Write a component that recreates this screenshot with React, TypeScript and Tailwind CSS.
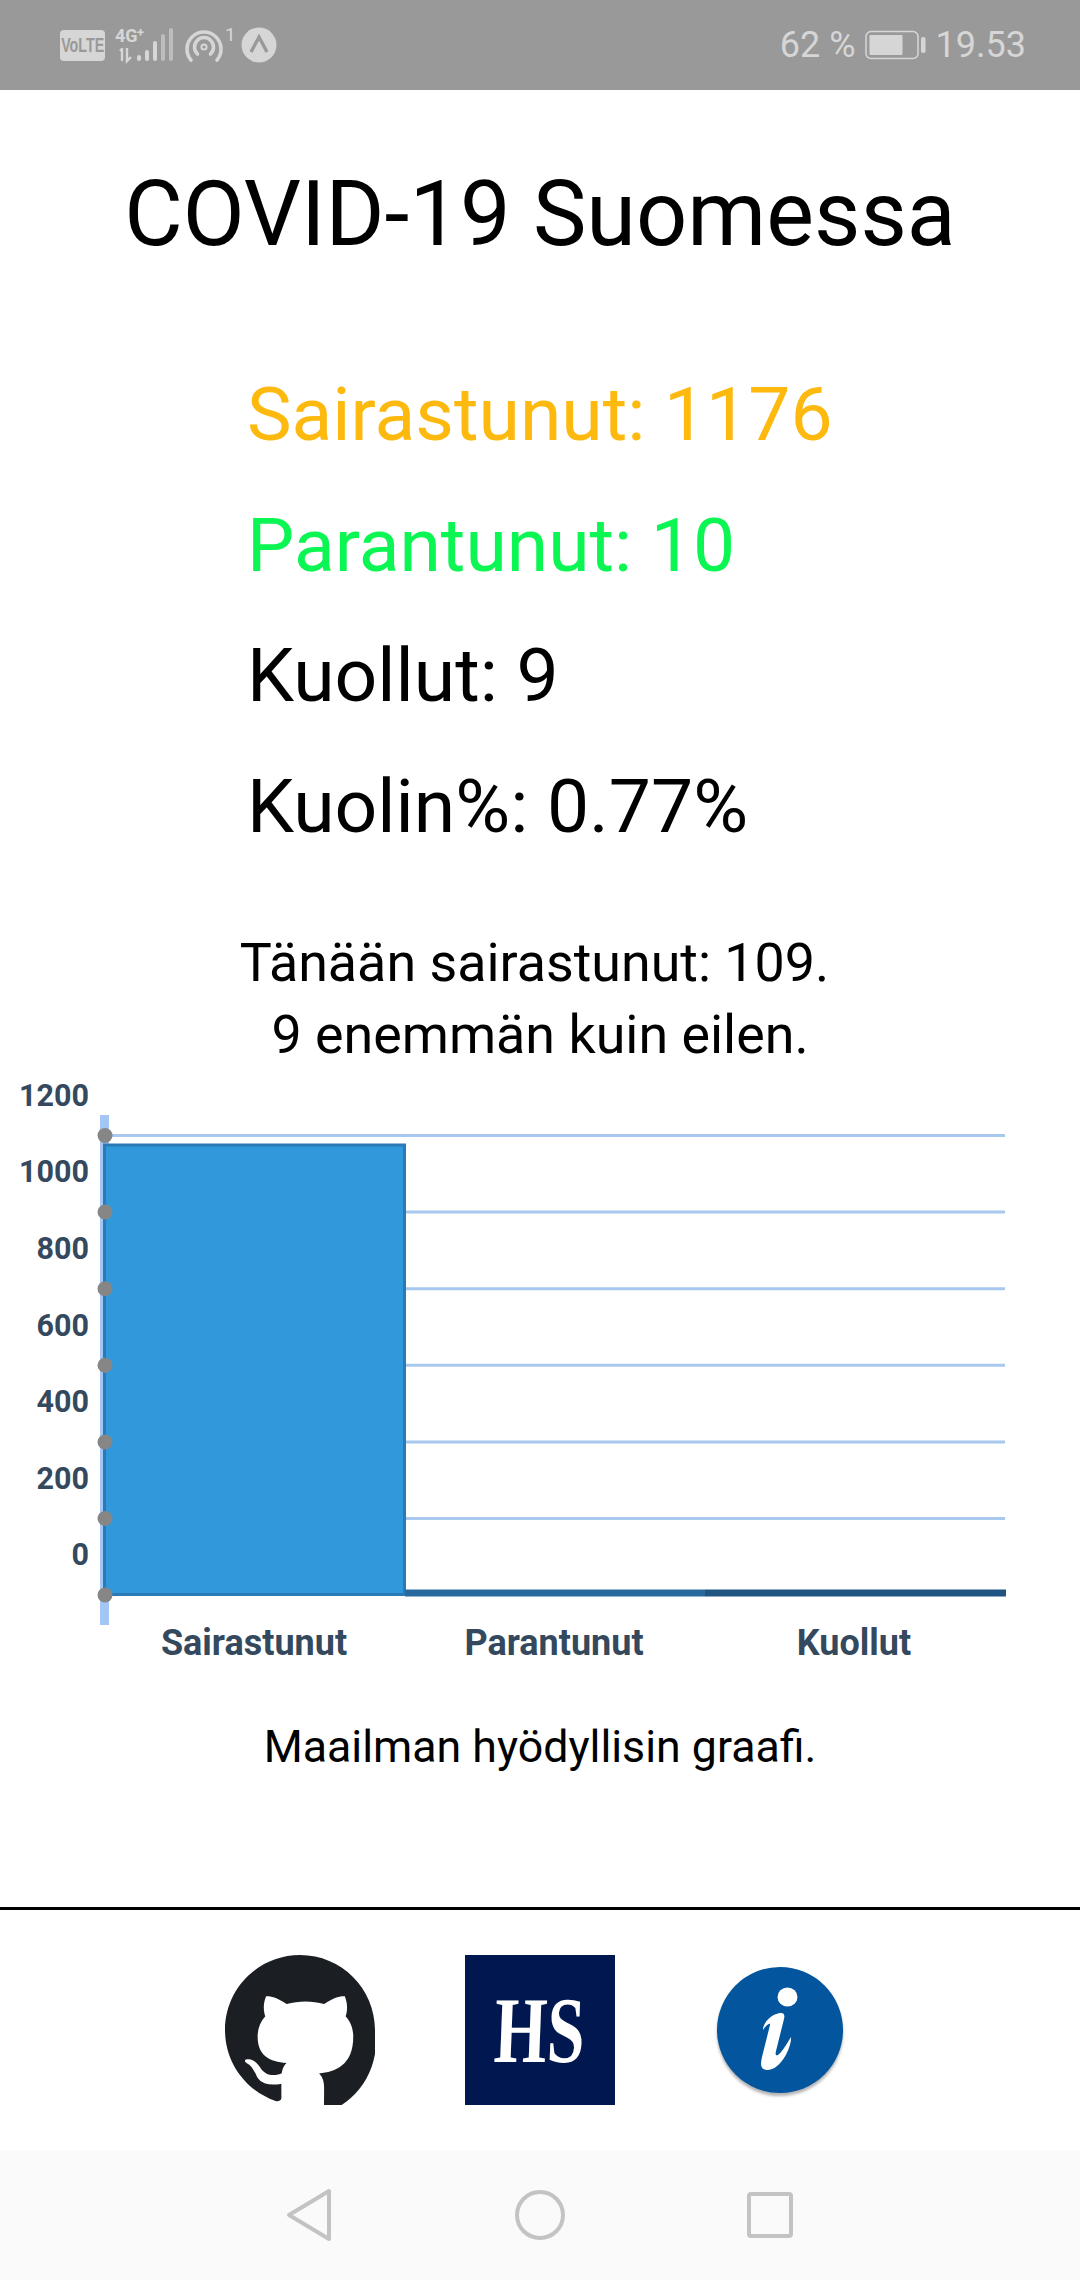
const gridLines = [1135.5, 1212, 1288.7, 1365.3, 1442, 1518.5]
const dots = [1135.5, 1212, 1288.7, 1365.3, 1442, 1518.5, 1595]
const yLabels = [
  { text: '1200', y: 1095 },
  { text: '1000', y: 1170.5 },
  { text: '800', y: 1248 },
  { text: '600', y: 1324.5 },
  { text: '400', y: 1401 },
  { text: '200', y: 1477.5 },
  { text: '0', y: 1554 },
]
const xLabels = [
  { text: 'Sairastunut', x: 254 },
  { text: 'Parantunut', x: 554 },
  { text: 'Kuollut', x: 854 },
]

function StatusBar() {
  return (
    <div className="flex h-[90px] shrink-0 items-center justify-between bg-[#999999] pl-[60px] pr-[54px] font-['Roboto',sans-serif] text-[#d6d6d6]">
      <div className="flex items-center">
        <div className="flex h-[31px] w-[45px] items-center justify-center rounded-[4px] bg-[#d6d6d6] font-['Liberation_Sans',sans-serif] text-[21px] font-bold text-[#999999]">
          <span className="scale-x-[0.68] whitespace-nowrap">VoLTE</span>
        </div>
        <svg width="60" height="40" viewBox="0 0 60 40" className="ml-[10px]">
          <text x="0" y="17" fontSize="18" fontWeight="700" fill="#d6d6d6" fontFamily="Roboto">4G</text>
          <text x="22" y="12" fontSize="13" fontWeight="700" fill="#d6d6d6" fontFamily="Roboto">+</text>
          <path d="M7 24l-2 2M7 23v13M12 23v13l4-4" stroke="#d6d6d6" strokeWidth="2.4" fill="none" />
          <rect x="22" y="30" width="4" height="6" rx="2" fill="#d6d6d6" />
          <rect x="30" y="25" width="4" height="11" rx="2" fill="#d6d6d6" />
          <rect x="38" y="16" width="4" height="20" rx="2" fill="#d6d6d6" />
          <rect x="46" y="9" width="4" height="27" rx="2" fill="#bdbdbd" />
          <rect x="54" y="3" width="4" height="33" rx="2" fill="#bdbdbd" />
        </svg>
        <svg width="40" height="34" viewBox="0 0 40 34" className="ml-[9px] mt-[2px]">
          <path d="M7 31a17 17 0 1 1 26 0" stroke="#d6d6d6" strokeWidth="3.6" fill="none" strokeLinecap="round" />
          <path d="M13.5 25a9.5 9.5 0 1 1 13 0" stroke="#d6d6d6" strokeWidth="3.6" fill="none" strokeLinecap="round" />
          <circle cx="20" cy="18" r="2.6" fill="none" stroke="#d6d6d6" strokeWidth="2" />
        </svg>
        <span className="mb-[22px] ml-[1px] text-[19px] leading-none">1</span>
        <svg width="36" height="36" viewBox="0 0 36 36" className="ml-[5px]">
          <circle cx="18" cy="18" r="17.5" fill="#d6d6d6" />
          <path d="M10 25l8-15 8 15" stroke="#999999" strokeWidth="3.4" fill="none" />
        </svg>
      </div>
      <div className="flex items-center">
        <span className="text-[36px] leading-none">62 %</span>
        <svg width="62" height="30" viewBox="0 0 62 30" className="ml-[9px]">
          <rect x="1" y="1.5" width="52" height="27" rx="5" fill="none" stroke="#d6d6d6" strokeWidth="1.5" />
          <rect x="4.5" y="5" width="33" height="20" rx="1" fill="#d6d6d6" />
          <rect x="56" y="7" width="4.5" height="16" rx="2" fill="#d6d6d6" />
        </svg>
        <span className="ml-[9px] text-[36px] leading-none">19.53</span>
      </div>
    </div>
  )
}

function Chart() {
  return (
    <svg width="1080" height="609" viewBox="0 1071 1080 609" className="block shrink-0" fontFamily="Roboto">
      <rect x="100" y="1115" width="9" height="510" fill="#a3c6f5" />
      {gridLines.map(y => (
        <line key={y} x1="105" x2="1005" y1={y} y2={y} stroke="#a8c8f0" strokeWidth="3" />
      ))}
      <rect x="104.5" y="1145" width="300" height="449.5" fill="#3298dc" stroke="#2b7ab5" strokeWidth="3" />
      <rect x="405" y="1589.5" width="300" height="7" fill="#286a9e" />
      <rect x="705" y="1589.5" width="301" height="7" fill="#1f5580" />
      {dots.map(y => (
        <circle key={y} cx="105" cy={y} r="7.5" fill="#868686" />
      ))}
      {yLabels.map(l => (
        <text key={l.text} x="89" y={l.y + 11} textAnchor="end" fontSize="30.5" fontWeight="700" fill="#34495e">
          {l.text}
        </text>
      ))}
      {xLabels.map(l => (
        <text key={l.text} x={l.x} y={1655} textAnchor="middle" fontSize="36" fontWeight="700" fill="#34495e">
          {l.text}
        </text>
      ))}
    </svg>
  )
}

function Links() {
  return (
    <div className="flex h-[243px] shrink-0 items-center justify-center gap-[90px] border-t-[3px] border-black">
      <svg width="150" height="150" viewBox="0 0 16 16" className="shrink-0">
        <path
          fill="#1b1f23"
          d="M8 0C3.58 0 0 3.58 0 8c0 3.54 2.29 6.53 5.47 7.59.4.07.55-.17.55-.38 0-.19-.01-.82-.01-1.49-2.01.37-2.53-.49-2.69-.94-.09-.23-.48-.94-.82-1.13-.28-.15-.68-.52-.01-.53.63-.01 1.08.58 1.23.82.72 1.21 1.87.87 2.33.66.07-.52.28-.87.51-1.07-1.78-.2-3.08-.75-3.08-2.85 0-.87.31-1.59.82-2.15-.08-.2-.36-1.02.08-2.12 0 0 .67-.21 2.2.82.64-.18 1.32-.27 2-.27.68 0 1.36.09 2 .27 1.53-1.04 2.2-.82 2.2-.82.44 1.1.16 1.92.08 2.12.51.56.82 1.27.82 2.15 0 3.07-1.87 3.75-3.65 3.95.29.25.54.73.54 1.48 0 1.07-.01 1.93-.01 2.2 0 .21.15.46.55.38A8.013 8.013 0 0016 8c0-4.42-3.58-8-8-8z"
        />
      </svg>
      <div className="flex h-[150px] w-[150px] shrink-0 items-center justify-center overflow-hidden bg-[#00174f]">
        <span className="-skew-x-3 scale-x-[0.72] font-['Liberation_Serif',serif] text-[94px] font-bold leading-none text-white">
          HS
        </span>
      </div>
      <div className="flex h-[150px] w-[150px] shrink-0 items-center justify-center">
        <div className="flex h-[126px] w-[126px] items-center justify-center rounded-full bg-[#03569e] shadow-[0_3px_3px_rgba(0,0,0,0.3)]">
          <svg width="126" height="126" viewBox="0 0 126 126">
            <ellipse cx="70.5" cy="30" rx="10" ry="9.5" fill="#fff" />
            <path
              d="M64 46c3 0 4 2 3 6l-8 32c-1 4 0 5 2 4 3-2 7-8 13-18 1 8-9 33-24 33-6 0-7-5-5-13l8-32c1-3-4 0-7 5 0-8 10-17 18-17z"
              fill="#fff"
            />
          </svg>
        </div>
      </div>
    </div>
  )
}

function NavBar() {
  return (
    <div className="flex h-[130px] shrink-0 items-center justify-center gap-[180px] bg-[#fafafa]">
      <svg width="50" height="54" viewBox="0 0 50 54" fill="none" stroke="#c3c3c3" strokeWidth="4" strokeLinejoin="round">
        <path d="M4 27L44 3V51Z" />
      </svg>
      <svg width="50" height="54" viewBox="0 0 50 54" fill="none" stroke="#c3c3c3" strokeWidth="4">
        <circle cx="25" cy="27" r="23" />
      </svg>
      <svg width="50" height="54" viewBox="0 0 50 54" fill="none" stroke="#c3c3c3" strokeWidth="4" strokeLinejoin="round">
        <rect x="4" y="6" width="42" height="42" rx="2" />
      </svg>
    </div>
  )
}

export default function App() {
  return (
    <div className="flex h-[2280px] w-[1080px] flex-col bg-white font-['Roboto',sans-serif] text-black">
      <StatusBar />
      <h1 className="flex h-[250px] shrink-0 items-center justify-center text-[90px] font-normal leading-none">
        COVID-19 Suomessa
      </h1>
      <div className="mt-[9px] flex shrink-0 flex-col pl-[247px] text-[75px]">
        <p className="flex h-[130.5px] items-center text-[#fdb90e]">Sairastunut: 1176</p>
        <p className="flex h-[130.5px] items-center text-[#0cf653]">Parantunut: 10</p>
        <p className="flex h-[130.5px] items-center">Kuollut: 9</p>
        <p className="flex h-[130.5px] items-center">Kuolin%: 0.77%</p>
      </div>
      <div className="mt-[56px] shrink-0 text-center text-[53.8px] leading-[72px]">
        <p className="pr-[11px]">Tänään sairastunut: 109.</p>
        <p>9 enemmän kuin eilen.</p>
      </div>
      <Chart />
      <p className="mt-[37px] shrink-0 text-center text-[44.7px] leading-[60px]">Maailman hyödyllisin graafi.</p>
      <div className="h-[130px] shrink-0" />
      <Links />
      <NavBar />
    </div>
  )
}
